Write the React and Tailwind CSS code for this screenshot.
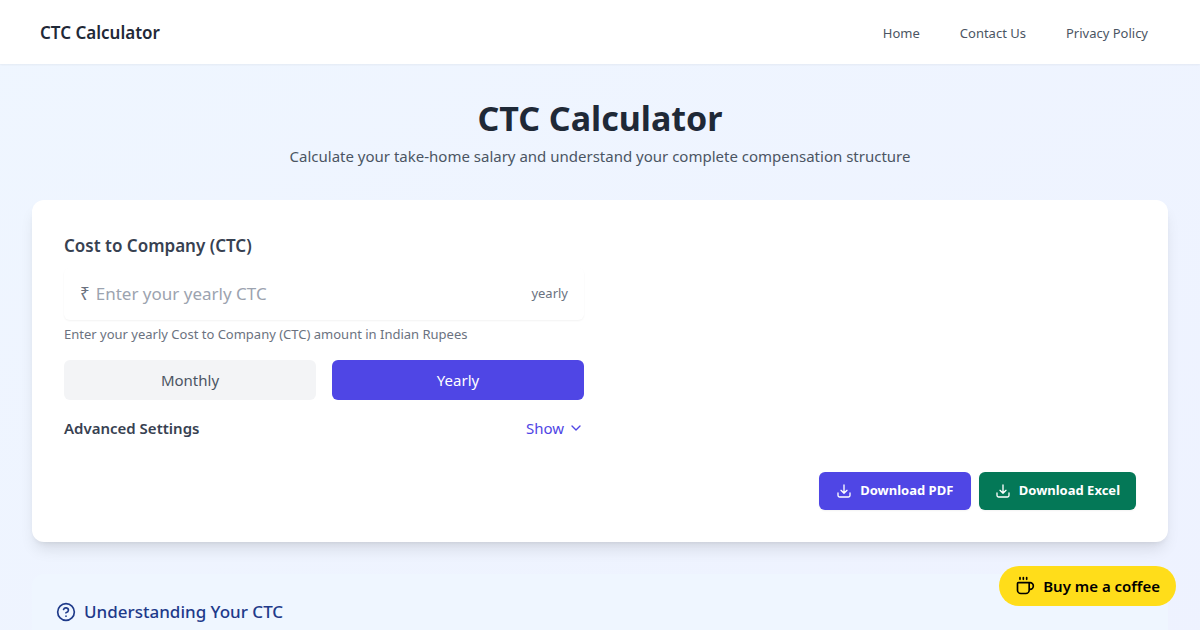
import React, { useState } from "react";
import { ChevronDown, ChevronUp, CircleHelp, Coffee } from "lucide-react";

function DownloadIcon() {
  return (
    <svg className="size-4" viewBox="0 0 24 24" fill="none" stroke="currentColor" strokeWidth="2" strokeLinecap="round" strokeLinejoin="round" aria-hidden="true">
      <path d="M3 15v3.5A2.5 2.5 0 0 0 5.5 21h13a2.5 2.5 0 0 0 2.5-2.5V15M16.5 11 12 15.5m0 0L7.5 11m4.5 4.5V3" />
    </svg>
  );
}

function Header() {
  return (
    <header className="relative bg-white shadow-xs">
      <div className="flex h-16 items-center justify-between px-10 pt-0.5">
        <a href="#" className="text-[17px] font-semibold text-[#1f2937]">CTC Calculator</a>
        <nav className="flex gap-10 pt-0.5 pr-3 text-[13px] text-[#4b5563]">
          <a href="#home">Home</a>
          <a href="#contact">Contact Us</a>
          <a href="#privacy">Privacy Policy</a>
        </nav>
      </div>
    </header>
  );
}

function PeriodButton({ active, onClick, children }) {
  return (
    <button
      type="button"
      aria-pressed={active}
      onClick={onClick}
      className={`h-10 flex-1 rounded-md text-[15px] ${active ? "bg-[#4f46e5] text-white" : "bg-[#f3f4f6] text-[#4b5563]"}`}
    >
      {children}
    </button>
  );
}

function CalculatorCard() {
  const [period, setPeriod] = useState("yearly");
  const [open, setOpen] = useState(false);
  const Chevron = open ? ChevronUp : ChevronDown;

  return (
    <section className="rounded-xl bg-white p-8 shadow-lg">
      <div className="grid grid-cols-1 gap-8 md:grid-cols-2">
        <div className="flex flex-col">
          <label htmlFor="ctc" className="text-[17px] leading-7 font-semibold text-[#374151]">Cost to Company (CTC)</label>
          <div className="mt-2 flex h-[52px] items-center gap-1.5 rounded-md px-4 shadow-xs">
            <span className="text-[17px] text-[#6b7280]">₹</span>
            <input
              id="ctc"
              type="text"
              inputMode="numeric"
              placeholder={`Enter your ${period} CTC`}
              className="min-w-0 flex-1 bg-transparent text-[17px] text-[#374151] outline-none placeholder:text-[#9ca3af]"
            />
            <span className="text-[13px] text-[#6b7280]">{period}</span>
          </div>
          <p className="mt-1 text-[13px] leading-5 text-[#6b7280]">
            Enter your {period} Cost to Company (CTC) amount in Indian Rupees
          </p>
          <div className="mt-4 flex gap-4">
            <PeriodButton active={period === "monthly"} onClick={() => setPeriod("monthly")}>Monthly</PeriodButton>
            <PeriodButton active={period === "yearly"} onClick={() => setPeriod("yearly")}>Yearly</PeriodButton>
          </div>
          <div className="mt-4 flex items-center justify-between text-[15px] leading-6">
            <h2 className="font-semibold text-[#374151]">Advanced Settings</h2>
            <button type="button" aria-expanded={open} onClick={() => setOpen(!open)} className="flex items-center gap-1 text-[#4f46e5]">
              {open ? "Hide" : "Show"}
              <Chevron className="size-4" />
            </button>
          </div>
        </div>
      </div>
      <div className="mt-8 flex flex-wrap justify-end gap-2 text-[13px] font-bold text-white">
        <button type="button" className="flex h-[38px] min-w-38 items-center justify-center gap-2 rounded-md bg-[#4f46e5] px-4 shadow-xs">
          <DownloadIcon />
          Download PDF
        </button>
        <button type="button" className="flex h-[38px] min-w-38 items-center justify-center gap-2 rounded-md bg-[#047857] px-4 shadow-xs">
          <DownloadIcon />
          Download Excel
        </button>
      </div>
    </section>
  );
}

export default function App() {
  return (
    <div className="min-h-screen bg-linear-to-br from-[#eff6ff] to-[#eef2ff] font-['Noto_Sans',sans-serif]">
      <Header />
      <main className="px-8 py-8">
        <div className="mb-8 text-center">
          <h1 className="mb-1 text-[34px] leading-11 font-bold text-[#1f2937]">CTC Calculator</h1>
          <p className="text-[15px] leading-6 text-[#4b5563]">
            Calculate your take-home salary and understand your complete compensation structure
          </p>
        </div>
        <CalculatorCard />
        <section className="mt-8 rounded-xl bg-[#eff6ff] p-6">
          <h2 className="flex items-center gap-2 text-[17px] leading-7 font-medium text-[#1e3a8a]">
            <CircleHelp className="size-5" />
            Understanding Your CTC
          </h2>
        </section>
      </main>
      <a href="#coffee" className="fixed right-6 bottom-6 flex h-10 items-center gap-2 rounded-full bg-[#ffdd1a] px-4 text-[15px] font-semibold text-black">
        <Coffee className="size-5" />
        Buy me a coffee
      </a>
    </div>
  );
}
